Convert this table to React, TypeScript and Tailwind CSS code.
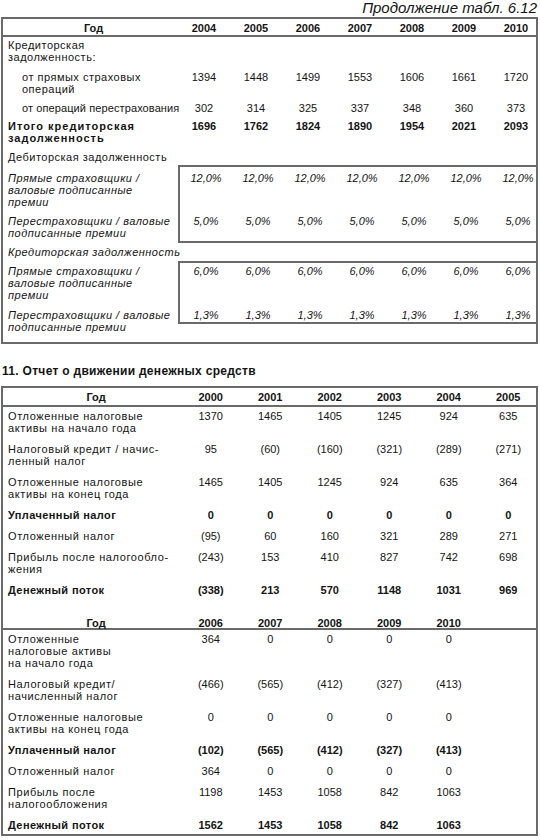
import React from 'react';

// --- data ---------------------------------------------------------------

const YEARS_A = ['2004', '2005', '2006', '2007', '2008', '2009', '2010'];

type Row1 = { label: React.ReactNode; values?: string[]; bold?: boolean; indent?: boolean; pad: string; tight?: boolean };

const TOP_ROWS: Row1[] = [
  { label: <>Кредиторская<br />задолженность:</>, pad: 'pt-[2px] pb-[4px]' },
  { label: <>от прямых страховых<br />операций</>, indent: true, values: ['1394', '1448', '1499', '1553', '1606', '1661', '1720'], pad: 'pt-[4px] pb-[3px]' },
  { label: 'от операций перестрахования', indent: true, tight: true, values: ['302', '314', '325', '337', '348', '360', '373'], pad: 'pt-[4px] pb-[3px]' },
  { label: <>Итого кредиторская<br />задолженность</>, bold: true, values: ['1696', '1762', '1824', '1890', '1954', '2021', '2093'], pad: 'pt-[3px] pb-[3px]' },
  { label: 'Дебиторская задолженность', pad: 'pt-[4px] pb-[2px]' },
];

const fill = (v: string) => Array(7).fill(v) as string[];

type CashRow = { label: React.ReactNode; values: string[]; bold?: boolean };

const CASH_A: CashRow[] = [
  { label: <>Отложенные налоговые<br />активы на начало года</>, values: ['1370', '1465', '1405', '1245', '924', '635'] },
  { label: <>Налоговый кредит / начис-<br />ленный налог</>, values: ['95', '(60)', '(160)', '(321)', '(289)', '(271)'] },
  { label: <>Отложенные налоговые<br />активы на конец года</>, values: ['1465', '1405', '1245', '924', '635', '364'] },
  { label: 'Уплаченный налог', bold: true, values: ['0', '0', '0', '0', '0', '0'] },
  { label: 'Отложенный налог', values: ['(95)', '60', '160', '321', '289', '271'] },
  { label: <>Прибыль после налогообло-<br />жения</>, values: ['(243)', '153', '410', '827', '742', '698'] },
  { label: 'Денежный поток', bold: true, values: ['(338)', '213', '570', '1148', '1031', '969'] },
];

const CASH_B: CashRow[] = [
  { label: <>Отложенные<br />налоговые активы<br />на начало года</>, values: ['364', '0', '0', '0', '0'] },
  { label: <>Налоговый кредит/<br />начисленный налог</>, values: ['(466)', '(565)', '(412)', '(327)', '(413)'] },
  { label: <>Отложенные налоговые<br />активы на конец года</>, values: ['0', '0', '0', '0', '0'] },
  { label: 'Уплаченный налог', bold: true, values: ['(102)', '(565)', '(412)', '(327)', '(413)'] },
  { label: 'Отложенный налог', values: ['364', '0', '0', '0', '0'] },
  { label: <>Прибыль после<br />налогообложения</>, values: ['1198', '1453', '1058', '842', '1063'] },
  { label: 'Денежный поток', bold: true, values: ['1562', '1453', '1058', '842', '1063'] },
];

// --- pieces -------------------------------------------------------------

const Vals7 = ({ values, className = '' }: { values: string[]; className?: string }) => (
  <div className={`grid grid-cols-[repeat(7,52px)] text-center tracking-normal ${className}`}>
    {values.map((v, i) => <span key={i}>{v}</span>)}
  </div>
);

const Vals6 = ({ values, className = '' }: { values: string[]; className?: string }) => (
  <div className={`grid grid-cols-[repeat(6,59.5px)] text-center tracking-normal ${className}`}>
    {values.map((v, i) => <span key={i}>{v}</span>)}
  </div>
);

// Italic ratio block: labels on the left, values framed by a box on the right
const RatioBox = ({ rows, tail }: {
  rows: { label: React.ReactNode; value: string; pt: string; h: string }[];
  tail: string;
}) => (
  <div className="flex items-start italic">
    <div className={`w-[175px] shrink-0 pl-[5px] whitespace-nowrap tracking-[0.5px] border-y-2 border-transparent ${tail}`}>
      {rows.map((r, i) => <div key={i} className={r.pt}>{r.label}</div>)}
    </div>
    <div className="flex-1 min-w-0 border-y-2 border-l-2 border-[#6a6a6a]">
      {rows.map((r, i) => <Vals7 key={i} values={fill(r.value)} className={`${r.pt} ${r.h}`} />)}
    </div>
  </div>
);

const CashRows = ({ rows, last }: { rows: CashRow[]; last?: boolean }) => (
  <>
    {rows.map((r, i) => {
      const pad = last && i === rows.length - 1 ? 'pt-[3px] pb-[3px]' : 'pt-[3px] pb-[6px]';
      return (
        <div key={i} className={`flex ${pad} ${r.bold ? 'font-bold' : ''}`}>
          <div className={`w-[178px] shrink-0 pl-[5px] whitespace-nowrap ${r.bold ? 'tracking-[0.4px]' : 'tracking-[0.6px]'}`}>{r.label}</div>
          <Vals6 values={r.values} />
        </div>
      );
    })}
  </>
);

export default function App() {
  return (
    <div className="w-[540px] h-[840px] overflow-hidden bg-white text-[#141414] text-[11px] leading-[12px] font-['Liberation_Sans',Arial,sans-serif]">
      <div className="h-[17px] pr-[3px] text-right italic text-[15px] leading-[16px]">Продолжение табл. 6.12</div>

      {/* Table 6.12 continued */}
      <div className="ml-[1px] w-[537px] border-2 border-[#6a6a6a]">
        <div className="flex h-[18px] leading-[18px] font-bold border-b-2 border-[#6a6a6a]">
          <div className="w-[175px] shrink-0 pl-[6px] text-center">Год</div>
          <Vals7 values={YEARS_A} className="leading-[18px]" />
        </div>

        {TOP_ROWS.map((r, i) => (
          <div key={i} className={`flex ${r.pad} ${r.bold ? 'font-bold' : ''}`}>
            <div className={`w-[175px] shrink-0 whitespace-nowrap ${r.indent ? 'pl-[19px]' : 'pl-[5px]'} ${r.bold ? 'tracking-[1px]' : r.tight ? 'tracking-[0.1px]' : 'tracking-[0.5px]'}`}>{r.label}</div>
            {r.values && <Vals7 values={r.values} />}
          </div>
        ))}

        <RatioBox
          tail="pb-0"
          rows={[
            { label: <>Прямые страховщики /<br />валовые подписанные<br />премии</>, value: '12,0%', pt: 'pt-[5px]', h: 'h-[41px]' },
            { label: <>Перестраховщики / валовые<br />подписанные премии</>, value: '5,0%', pt: 'pt-[7px]', h: 'h-[33px]' },
          ]}
        />

        <div className="pl-[5px] pt-[3px] pb-[3px] italic tracking-[0.5px]">Кредиторская задолженность</div>

        <RatioBox
          tail="pb-[7px]"
          rows={[
            { label: <>Прямые страховщики /<br />валовые подписанные<br />премии</>, value: '6,0%', pt: 'pt-[2px]', h: 'h-[38px]' },
            { label: <>Перестраховщики / валовые<br />подписанные премии</>, value: '1,3%', pt: 'pt-[8px]', h: 'h-[21px]' },
          ]}
        />
      </div>

      <div className="mt-[20px] pl-[2px] h-[14px] leading-[14px] text-[12px] font-bold tracking-[0.3px]">
        11. Отчет о движении денежных средств
      </div>

      {/* Cash flow statement */}
      <div className="mt-[8px] ml-[1px] w-[537px] border-2 border-[#6a6a6a]">
        <div className="flex h-[19px] leading-[19px] font-bold border-b-2 border-[#6a6a6a]">
          <div className="w-[178px] shrink-0 pl-[8px] text-center">Год</div>
          <Vals6 values={['2000', '2001', '2002', '2003', '2004', '2005']} className="leading-[19px]" />
        </div>
        <CashRows rows={CASH_A} />

        <div className="flex h-[28px] pt-[15px] font-bold border-b-2 border-[#6a6a6a]">
          <div className="w-[178px] shrink-0 pl-[8px] text-center">Год</div>
          <Vals6 values={['2006', '2007', '2008', '2009', '2010']} />
        </div>
        <CashRows rows={CASH_B} last />
      </div>
    </div>
  );
}
